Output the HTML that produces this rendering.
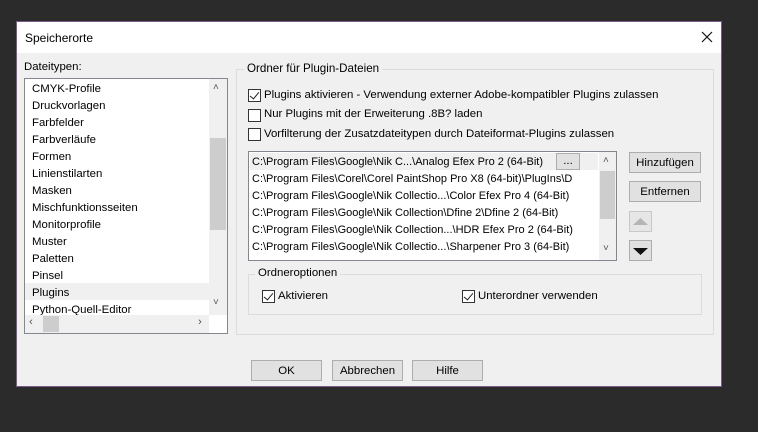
<!DOCTYPE html>
<html><head><meta charset="utf-8"><style>
*{box-sizing:border-box;margin:0;padding:0}
body{width:758px;height:432px;background:#2b2b2b;position:relative;overflow:hidden;font-family:"Liberation Sans",sans-serif;font-size:11.4px;color:#000}
.a{position:absolute;white-space:nowrap}
#dlg{left:16px;top:21px;width:706px;height:366px;background:#f0f0f0;border:1px solid #7a5a86}
#tb{left:0;top:0;width:704px;height:31px;background:#fff}
.btn{position:absolute;background:#e1e1e1;border:1px solid #adadad;text-align:center;line-height:20px}
.cb{position:absolute;width:13px;height:13px;border:1px solid #333;background:#fff}
.cb.k::after{content:"";position:absolute;left:3px;top:0px;width:4px;height:8px;border-right:1.3px solid #222;border-bottom:1.3px solid #222;transform:rotate(40deg)}
.grp{position:absolute;border:1px solid #dcdcdc}
.lg{position:absolute;background:#f0f0f0;padding:0 3px;top:-8px;left:7px}
</style></head><body>
<div id="dlg" class="a">
<div id="tb" class="a"></div>
<div class="a" style="left:8px;top:9px;font-size:12px">Speicherorte</div>
<svg class="a" style="left:684px;top:9px" width="12" height="12"><path d="M1 1L11 11M11 1L1 11" stroke="#111" stroke-width="1.2"/></svg>
<div class="a" style="left:7px;top:39px">Dateitypen:</div>
<div class="a" style="left:7px;top:56px;width:204px;height:256px;background:#fff;border:1px solid #828790">
 <div class="a" style="left:0;top:204px;width:184px;height:17px;background:#f0f0f0"></div>
 <div class="a" style="left:7px;top:2px;line-height:17px">CMYK-Profile<br>Druckvorlagen<br>Farbfelder<br>Farbverläufe<br>Formen<br>Linienstilarten<br>Masken<br>Mischfunktionsseiten<br>Monitorprofile<br>Muster<br>Paletten<br>Pinsel<br>Plugins<br>Python-Quell-Editor</div>
 <div class="a" style="left:184px;top:0;width:18px;height:236px;background:#f0f0f0"></div>
 <div class="a" style="left:185px;top:59px;width:16px;height:92px;background:#cdcdcd"></div>
 <div class="a" style="left:188px;top:3px;color:#555;font-size:10px">˄</div>
 <div class="a" style="left:188px;top:218px;color:#555;font-size:10px">˅</div>
 <div class="a" style="left:0;top:236px;width:184px;height:18px;background:#f0f0f0"></div>
 <div class="a" style="left:18px;top:237px;width:16px;height:16px;background:#cdcdcd"></div>
 <div class="a" style="left:4px;top:237px;color:#555">‹</div>
 <div class="a" style="left:173px;top:237px;color:#555">›</div>
</div>
<div class="grp" style="left:219px;top:47px;width:478px;height:266px"><div class="lg" style="font-size:11.6px">Ordner für Plugin-Dateien</div></div>
<div class="cb k" style="left:231px;top:67px"></div><div class="a" style="left:247px;top:67px">Plugins aktivieren - Verwendung externer Adobe-kompatibler Plugins zulassen</div>
<div class="cb" style="left:231px;top:87px"></div><div class="a" style="left:247px;top:86px">Nur Plugins mit der Erweiterung .8B? laden</div>
<div class="cb" style="left:231px;top:106px"></div><div class="a" style="left:247px;top:106px">Vorfilterung der Zusatzdateitypen durch Dateiformat-Plugins zulassen</div>
<div class="a" style="left:231px;top:129px;width:369px;height:110px;background:#fff;border:1px solid #828790">
 <div class="a" style="left:1px;top:1px;width:348px;height:17px;background:#f0f0f0"></div>
 <div class="a" style="left:3px;top:2px;line-height:17px;font-size:11px">C:\Program Files\Google\Nik C...\Analog Efex Pro 2 (64-Bit)<br>C:\Program Files\Corel\Corel PaintShop Pro X8 (64-bit)\PlugIns\D<br>C:\Program Files\Google\Nik Collectio...\Color Efex Pro 4 (64-Bit)<br>C:\Program Files\Google\Nik Collection\Dfine 2\Dfine 2 (64-Bit)<br>C:\Program Files\Google\Nik Collection...\HDR Efex Pro 2 (64-Bit)<br>C:\Program Files\Google\Nik Collectio...\Sharpener Pro 3 (64-Bit)</div>
 <div class="btn" style="left:307px;top:1px;width:24px;height:17px;line-height:14px">...</div>
 <div class="a" style="left:350px;top:0;width:17px;height:108px;background:#f0f0f0"></div>
 <div class="a" style="left:351px;top:19px;width:15px;height:48px;background:#cdcdcd"></div>
 <div class="a" style="left:354px;top:3px;color:#555;font-size:10px">˄</div>
 <div class="a" style="left:354px;top:91px;color:#555;font-size:10px">˅</div>
</div>
<div class="btn" style="left:612px;top:130px;width:72px;height:21px">Hinzufügen</div>
<div class="btn" style="left:612px;top:159px;width:72px;height:21px">Entfernen</div>
<div class="btn" style="left:612px;top:189px;width:23px;height:21px;background:#e6e6e6;border-color:#c8c8c8"><svg width="21" height="19" style="display:block"><path d="M3 13L10.5 6L18 13Z" fill="#b5b5b5"/></svg></div>
<div class="btn" style="left:612px;top:218px;width:23px;height:21px"><svg width="21" height="19" style="display:block"><path d="M3 7L10.5 14L18 7Z" fill="#111"/></svg></div>
<div class="grp" style="left:231px;top:252px;width:454px;height:41px"><div class="lg" style="left:6px">Ordneroptionen</div></div>
<div class="cb k" style="left:245px;top:268px"></div><div class="a" style="left:261px;top:268px">Aktivieren</div>
<div class="cb k" style="left:445px;top:268px"></div><div class="a" style="left:461px;top:268px">Unterordner verwenden</div>
<div class="btn" style="left:234px;top:338px;width:71px;height:21px">OK</div>
<div class="btn" style="left:315px;top:338px;width:71px;height:21px">Abbrechen</div>
<div class="btn" style="left:395px;top:338px;width:71px;height:21px">Hilfe</div>
</div>
</body></html>
